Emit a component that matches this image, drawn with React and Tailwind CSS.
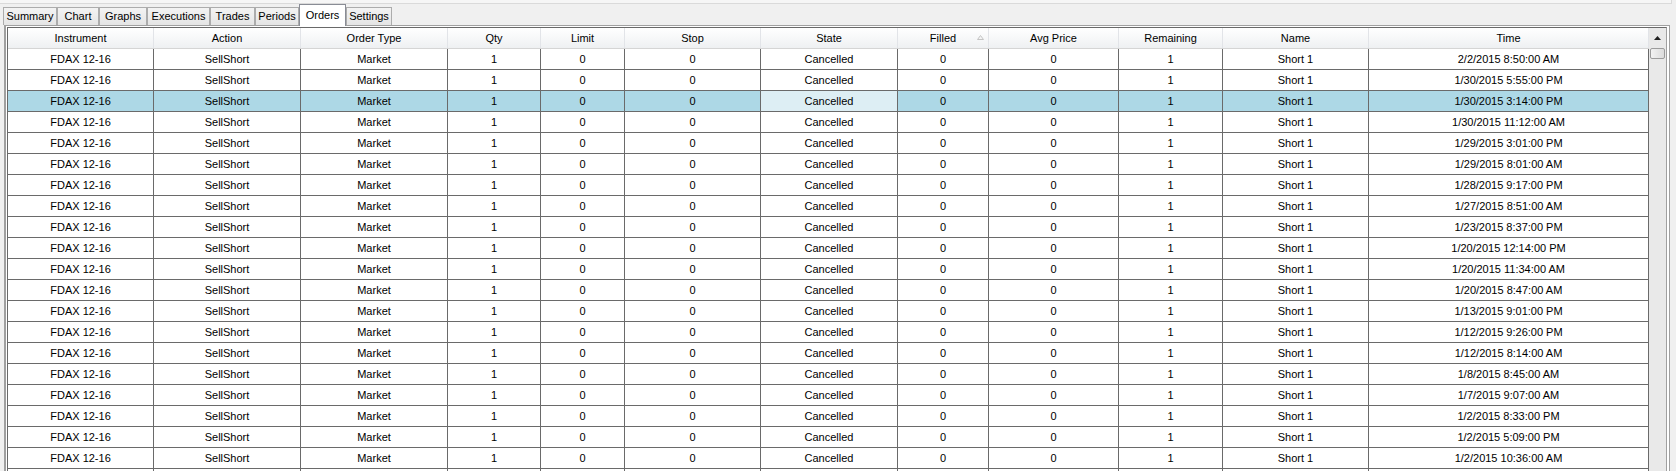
import React from 'react';

const tabs = [
    { label: 'Summary', w: 'w-[54px]' },
    { label: 'Chart', w: 'w-[42px]' },
    { label: 'Graphs', w: 'w-[48px]' },
    { label: 'Executions', w: 'w-[63px]' },
    { label: 'Trades', w: 'w-[45px]' },
    { label: 'Periods', w: 'w-[44px]' },
    { label: 'Orders', w: 'w-[47px]', active: true },
    { label: 'Settings', w: 'w-[46px]' },
];

const columns = [
    'Instrument',
    'Action',
    'Order Type',
    'Qty',
    'Limit',
    'Stop',
    'State',
    'Filled',
    'Avg Price',
    'Remaining',
    'Name',
    'Time',
];

const times = [
    '2/2/2015 8:50:00 AM',
    '1/30/2015 5:55:00 PM',
    '1/30/2015 3:14:00 PM',
    '1/30/2015 11:12:00 AM',
    '1/29/2015 3:01:00 PM',
    '1/29/2015 8:01:00 AM',
    '1/28/2015 9:17:00 PM',
    '1/27/2015 8:51:00 AM',
    '1/23/2015 8:37:00 PM',
    '1/20/2015 12:14:00 PM',
    '1/20/2015 11:34:00 AM',
    '1/20/2015 8:47:00 AM',
    '1/13/2015 9:01:00 PM',
    '1/12/2015 9:26:00 PM',
    '1/12/2015 8:14:00 AM',
    '1/8/2015 8:45:00 AM',
    '1/7/2015 9:07:00 AM',
    '1/2/2015 8:33:00 PM',
    '1/2/2015 5:09:00 PM',
    '1/2/2015 10:36:00 AM',
];

const rows = times.map((time) => [
    'FDAX 12-16',
    'SellShort',
    'Market',
    '1',
    '0',
    '0',
    'Cancelled',
    '0',
    '0',
    '1',
    'Short 1',
    time,
]);

// the next row only shows its top edge at the bottom of the view
rows.push(columns.map(() => ''));

const SELECTED = 2;
const gridCols =
    'grid grid-cols-[146px_147px_147px_93px_84px_136px_137px_91px_130px_104px_146px_280px]';

function Tab({ label, w, active }) {
    if (active) {
        return (
            <div
                className={`${w} h-[22px] -mb-[1px] relative z-10 bg-white border border-b-0 border-[#898c95] flex items-start justify-center pt-[2px]`}
            >
                {label}
            </div>
        );
    }
    return (
        <div
            className={`${w} h-[18px] bg-gradient-to-b from-[#f3f3f3] to-[#e5e5e5] border border-b-0 border-[#acacac] flex items-center justify-center`}
        >
            {label}
        </div>
    );
}

function SortGlyph() {
    return (
        <svg width="7" height="5" viewBox="0 0 7 5" className="absolute right-[4px] top-[7px]">
            <path d="M0.5 4.5 L3.5 0.5 L6.5 4.5 Z" fill="#f4f4f4" stroke="#c4c4c4" strokeWidth="1" />
        </svg>
    );
}

export default function App() {
    return (
        <div className="w-[1676px] h-[471px] overflow-hidden bg-[#f0f0f0] font-['Liberation_Sans',Arial,sans-serif] text-[11px] text-black">
            {/* top strip */}
            <div className="w-[1672px] h-[4px] bg-[#f6f6f6] border-b border-r border-[#dadada]" />

            {/* tab strip */}
            <div className="h-[21px] pl-[3px] flex items-end">
                {tabs.map((t) => (
                    <Tab key={t.label} {...t} />
                ))}
            </div>

            {/* panel */}
            <div className="ml-[4px] w-[1666px] border-t border-l-2 border-r border-[#a0a0a0] pt-[1px] pl-[1px] bg-white">
                <div className="w-[1660px] h-[470px] border-t border-l border-[#696969] border-r border-r-[#a0a0a0] flex">
                    <div className="w-[1641px] overflow-hidden">
                        {/* header */}
                        <div className={`${gridCols} h-[21px] bg-gradient-to-b from-white via-[#f7f8f9] to-[#eef0f2] border-b border-[#d5d5d5]`}>
                            {columns.map((c) => (
                                <div
                                    key={c}
                                    className="relative border-r border-[#e2e4e8] flex items-center justify-center"
                                >
                                    {c}
                                    {c === 'Filled' && <SortGlyph />}
                                </div>
                            ))}
                        </div>

                        {/* rows */}
                        {rows.map((r, i) => (
                            <div
                                key={i}
                                className={`${gridCols} h-[21px] ${i === SELECTED ? 'bg-[#add8e6]' : 'bg-white'}`}
                            >
                                {r.map((v, j) => (
                                    <div
                                        key={j}
                                        className={`border-r border-b border-[#6a6a6a] flex items-center justify-center ${
                                            i === SELECTED && j === 6 ? 'bg-[#ddeef4]' : ''
                                        }`}
                                    >
                                        {v}
                                    </div>
                                ))}
                            </div>
                        ))}
                    </div>

                    {/* vertical scrollbar */}
                    <div className="w-[17px] bg-[#e9e9e9] flex flex-col items-center">
                        <div className="h-[20px] w-full flex items-end justify-center pb-[8px]">
                            <svg width="7" height="4" viewBox="0 0 7 4">
                                <path d="M0 4 L3.5 0 L7 4 Z" fill="#202020" />
                            </svg>
                        </div>
                        <div className="w-[15px] h-[11px] rounded-[2px] border border-[#9c9c9c] bg-gradient-to-r from-[#f2f2f2] to-[#dcdcdc]" />
                    </div>
                </div>
            </div>
        </div>
    );
}
